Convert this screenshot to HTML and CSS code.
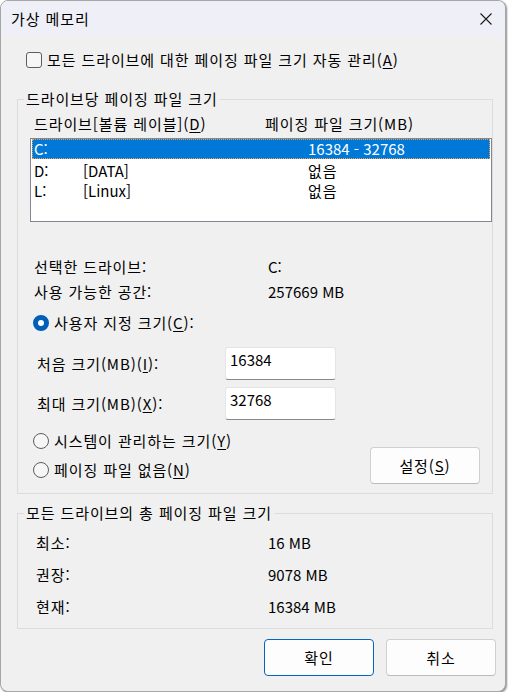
FILE: index.html
```html
<!DOCTYPE html>
<html lang="ko">
<head>
<meta charset="utf-8">
<title>가상 메모리</title>
<link rel="stylesheet" href="styles.css">
</head>
<body>
<div class="window">
  <div class="titlebar">
    <span class="title">가상 메모리</span>
    <svg class="close" width="12" height="12" viewBox="0 0 12 12"><path d="M0.5 0.5 L11.5 11.5 M11.5 0.5 L0.5 11.5" stroke="#1a1a1a" stroke-width="1.1" fill="none"/></svg>
  </div>
  <div class="content">
    <label class="check-row">
      <span class="checkbox"></span>
      <span>모든 드라이브에 대한 페이징 파일 크기 자동 관리(<u>A</u>)</span>
    </label>

    <fieldset class="group group-drive">
      <legend>드라이브당 페이징 파일 크기</legend>
      <div class="list-head">
        <span>드라이브[볼륨 레이블](<u>D</u>)</span>
        <span>페이징 파일 크기(MB)</span>
      </div>
      <div class="listbox">
        <div class="lrow selected"><span class="num">C:</span><span></span><span class="num">16384 - 32768</span></div>
        <div class="lrow"><span class="num">D:</span><span class="num">[DATA]</span><span>없음</span></div>
        <div class="lrow"><span class="num">L:</span><span class="num">[Linux]</span><span>없음</span></div>
      </div>
      <div class="info info-first"><span>선택한 드라이브:</span><span class="num">C:</span></div>
      <div class="info info-second"><span>사용 가능한 공간:</span><span class="num">257669 MB</span></div>
      <div class="radio-row radio-custom"><span class="radio on"></span><span>사용자 지정 크기(<u>C</u>):</span></div>
      <div class="field-row field-first"><span>처음 크기(MB)(<u>I</u>):</span><span class="input num">16384</span></div>
      <div class="field-row field-second"><span>최대 크기(MB)(<u>X</u>):</span><span class="input num">32768</span></div>
      <div class="lower">
        <div class="radios">
          <div class="radio-row"><span class="radio"></span><span>시스템이 관리하는 크기(<u>Y</u>)</span></div>
          <div class="radio-row radio-last"><span class="radio"></span><span>페이징 파일 없음(<u>N</u>)</span></div>
        </div>
        <button class="btn btn-set">설정(<u>S</u>)</button>
      </div>
    </fieldset>

    <fieldset class="group group-total">
      <legend>모든 드라이브의 총 페이징 파일 크기</legend>
      <div class="total"><span>최소:</span><span class="num">16 MB</span></div>
      <div class="total"><span>권장:</span><span class="num">9078 MB</span></div>
      <div class="total"><span>현재:</span><span class="num">16384 MB</span></div>
    </fieldset>

    <div class="actions">
      <button class="btn btn-default">확인</button>
      <button class="btn">취소</button>
    </div>
  </div>
</div>
</body>
</html>
```

FILE: styles.css
```css
* { box-sizing: border-box; }
html, body { margin: 0; padding: 0; }
body {
  background: #ffffff;
  font-family: "Noto Sans CJK KR", "Noto Sans", sans-serif;
  font-size: 15px;
  color: #000;
  line-height: 20px;
  letter-spacing: 0.9px;
}
.num { letter-spacing: 0; }
u { text-decoration: underline; text-underline-offset: 2px; text-decoration-thickness: 1px; }

.window {
  width: 506px;
  height: 692px;
  border: 1px solid #a6a6a6;
  border-radius: 8px;
  overflow: hidden;
  background: #f0f0f0;
  box-shadow: 1px 1px 2px rgba(0,0,0,0.45);
}

.titlebar {
  height: 35px;
  background: #eff0f7;
  display: flex;
  align-items: center;
  justify-content: space-between;
  padding: 0 13px 0 10px;
}
.title { font-size: 15px; }
.close { display: block; margin-top: 1px; }

.content {
  padding: 14px 12px 0 16px;
}

.check-row {
  display: flex;
  align-items: center;
  gap: 5px;
  margin-left: 9px;
  height: 20px;
}
.checkbox {
  width: 16px; height: 16px;
  border: 1px solid #5d5d5d;
  border-radius: 3px;
  background: #f6f6f6;
}

.group {
  margin: 0;
  padding: 0;
  min-width: 0;
  border: 1px solid #dcdcdc;
}
.group legend {
  margin-left: 6px;
  padding: 0 2px;
  line-height: 20px;
}
.group-drive { margin-top: 19px; padding-bottom: 9px; }

.list-head {
  display: grid;
  grid-template-columns: 231px 1fr;
  padding-left: 16px;
  margin-top: 5px;
  height: 20px;
}

.listbox {
  margin: 4px 0 0 12px;
  height: 84px;
  background: #fff;
  border: 1px solid #828790;
  padding: 0 1px;
}
.lrow {
  display: grid;
  grid-template-columns: 49px 225px 1fr;
  height: 20px;
  padding-left: 1px;
  border: 1px solid transparent;
  line-height: 18px;
}
.lrow + .lrow { line-height: 22px; }
.lrow.selected {
  background: #0078d7;
  color: #fff;
  border: 1px dotted #f0a24a;
}

.info {
  display: grid;
  grid-template-columns: 234px 1fr;
  padding-left: 16px;
  height: 20px;
}
.info-first { margin-top: 35px; }
.info-second { margin-top: 5px; }

.radio-row {
  display: flex;
  align-items: center;
  gap: 5px;
  padding-left: 15px;
  height: 20px;
}
.radio-custom { margin-top: 11px; }
.radio {
  width: 16px; height: 16px;
  border-radius: 50%;
  border: 1px solid #5d5d5d;
  background: #f6f6f6;
  flex: none;
}
.radio.on {
  border: 5px solid #005fb8;
  background: #fff;
}

.field-row {
  display: grid;
  grid-template-columns: 188px 111px;
  align-items: center;
  padding-left: 19px;
}
.field-first { margin-top: 14px; }
.field-second { margin-top: 7px; }
.input {
  height: 33px;
  background: #fff;
  border: 1px solid #e5e5e5;
  border-bottom: 1px solid #8a8a8a;
  border-radius: 3px;
  padding: 2px 0 0 4px;
}

.lower {
  display: flex;
  justify-content: space-between;
  align-items: flex-end;
  margin-top: 11px;
  padding-right: 12px;
}
.radios { padding-bottom: 4px; }
.radio-last { margin-top: 9px; }

.btn {
  font: inherit;
  letter-spacing: 0.9px;
  color: #000;
  background: #fdfdfd;
  border: 1px solid #d0d0d0;
  border-bottom-color: #bcbcbc;
  border-radius: 4px;
  width: 110px;
  height: 37px;
  padding: 0;
  line-height: 20px;
}
.btn-default { border: 1px solid #0067c0; }

.group-total { margin-top: 9px; padding: 0 0 11px 0; }
.total {
  display: grid;
  grid-template-columns: 232px 1fr;
  padding-left: 18px;
  height: 20px;
  margin-top: 12px;
}
.total:first-of-type { margin-top: 10px; }

.actions {
  display: flex;
  justify-content: flex-end;
  gap: 12px;
  margin-top: 10px;
  margin-right: -3px;
}
```
